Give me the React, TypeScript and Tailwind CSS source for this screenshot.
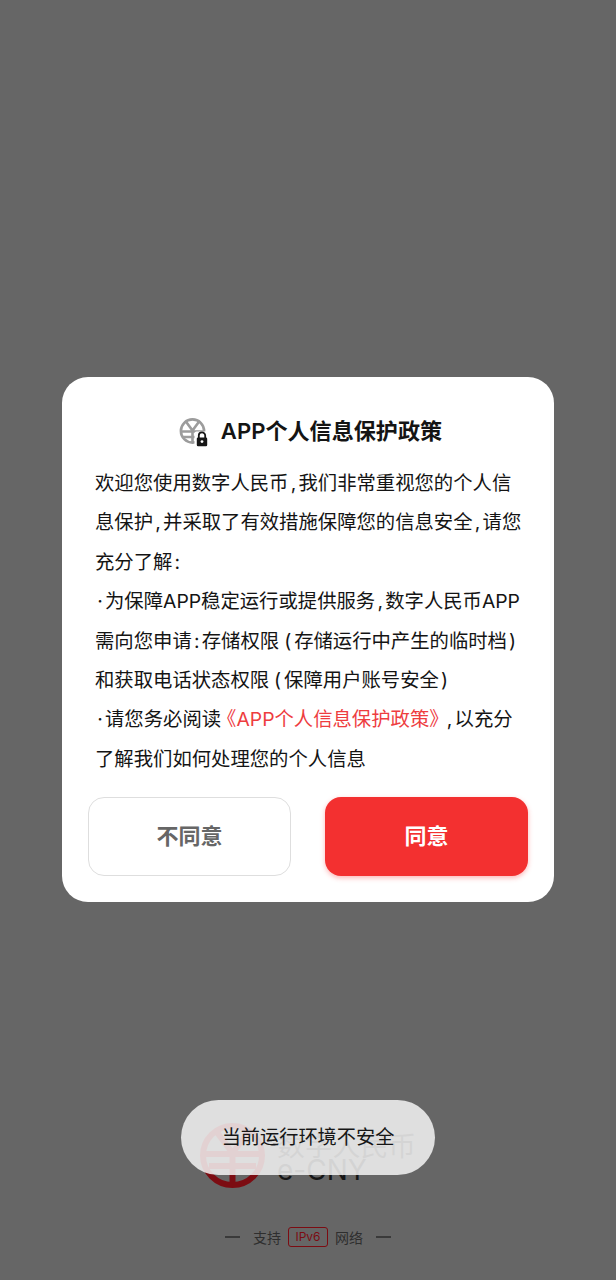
const cjk = "font-['Inter','Noto_Sans_CJK_SC',sans-serif]";

const YuanLock = () => (
  <svg width="30" height="30" viewBox="0 0 30 30" fill="none">
    <circle cx="13.5" cy="14" r="11.6" stroke="#9c9c9c" strokeWidth="2.6" />
    <path d="M6.5 4 13.5 13.5 20.5 4M13.5 13.5V26M3 14.5h21M4 20h16" stroke="#9c9c9c" strokeWidth="2.6" />
    <rect x="15.5" y="14.5" width="14.5" height="15.5" rx="2" fill="#fff" />
    <path d="M19.8 21v-2.4a3.2 3.2 0 0 1 6.4 0V21" stroke="#161616" strokeWidth="1.8" />
    <rect x="17.8" y="20.4" width="10.4" height="8.8" rx="1.3" fill="#161616" />
    <circle cx="23" cy="24.6" r="1.4" fill="#fff" />
  </svg>
);

const EcnyLogo = () => (
  <svg width="65" height="65" viewBox="0 0 65 65" fill="none">
    <circle cx="32.5" cy="32.5" r="29.5" stroke="#7c0c12" strokeWidth="6" />
    <path d="M16 8 32.5 30 49 8M32.5 30v32M4 31h57M9 43h47" stroke="#7c0c12" strokeWidth="6" />
  </svg>
);

const Comma = () => <span className="inline-block w-[10px] text-center">,</span>;
const Colon = () => <span className="inline-block w-[10px] text-center">:</span>;
const Dot = () => <span className="inline-block w-[10px] text-center">·</span>;
const Open = () => <span className="inline-block w-[15px] pl-[5px]">(</span>;
const Close = () => <span className="inline-block w-[15px] pl-[2px]">)</span>;

export default function App() {
  return (
    <div className={`relative h-[1280px] w-[616px] overflow-hidden bg-[#666666] ${cjk}`}>
      {/* page under the overlay */}
      <div className="flex h-full flex-col items-center justify-end pb-[33px]">
        <div className="mb-[39px] flex items-start gap-[12px]">
          <EcnyLogo />
          <div className="flex flex-col pt-[9px]">
            <span className="text-[27.8px] leading-[28px] text-[#1e1e1e]">数字人民币</span>
            <span className="-mt-[4px] text-[28px] leading-[28px] text-[#161616]">e-CNY</span>
          </div>
        </div>
        <div className="flex h-[20px] items-center text-[14px] text-[#2e2e2e]">
          <span className="h-[2px] w-[15px] bg-[#3a3a3a]" />
          <span className="ml-[13px]">支持</span>
          <span className="mx-[7px] flex h-[20px] w-[40px] items-center justify-center rounded-[3px] border border-[#7c0c12] text-[12px] text-[#7c0c12]">IPv6</span>
          <span>网络</span>
          <span className="ml-[13px] h-[2px] w-[15px] bg-[#3a3a3a]" />
        </div>
      </div>

      {/* policy dialog */}
      <div className="absolute left-[62px] top-[377px] h-[525px] w-[492px] rounded-[26px] bg-white px-[26px]">
        <div className="flex h-[87px] items-center justify-center gap-[12px] pl-[5px] pt-[22px]">
          <YuanLock />
          <h1 className="text-[22.1px] font-semibold text-[#141414]">APP个人信息保护政策</h1>
        </div>
        <div className="px-[7px] text-[19.35px] leading-[39.4px] text-[#141414]">
          <p className="whitespace-nowrap">欢迎您使用数字人民币<Comma />我们非常重视您的个人信</p>
          <p className="whitespace-nowrap">息保护<Comma />并采取了有效措施保障您的信息安全<Comma />请您</p>
          <p className="whitespace-nowrap">充分了解<Colon /></p>
          <p className="whitespace-nowrap"><Dot />为保障APP稳定运行或提供服务<Comma />数字人民币APP</p>
          <p className="whitespace-nowrap">需向您申请<Colon />存储权限<Open />存储运行中产生的临时档<Close /></p>
          <p className="whitespace-nowrap">和获取电话状态权限<Open />保障用户账号安全<Close /></p>
          <p className="whitespace-nowrap">
            <Dot />请您务必阅读
            <span className="text-[#ee3d3f]">
              <span className="-ml-[4px]">《</span>APP个人信息保护政策<span className="-mr-[4px]">》</span>
            </span>
            <Comma />以充分
          </p>
          <p className="whitespace-nowrap">了解我们如何处理您的个人信息</p>
        </div>
        <div className="mt-[18px] flex justify-between">
          <button className="h-[79px] w-[203px] rounded-[16px] border border-[#dedede] bg-white text-[22px] font-bold text-[#666666]">不同意</button>
          <button className="h-[79px] w-[203px] rounded-[16px] bg-[#f33030] text-[22px] font-bold text-white shadow-[0_2px_5px_rgba(245,49,49,0.35)]">同意</button>
        </div>
      </div>

      {/* toast */}
      <div className="absolute left-[181px] top-[1100px] flex h-[75px] w-[254px] items-center justify-center rounded-[38px] bg-[#f5f5f5]/85 text-[19.2px] text-[#161616]">
        当前运行环境不安全
      </div>
    </div>
  );
}
